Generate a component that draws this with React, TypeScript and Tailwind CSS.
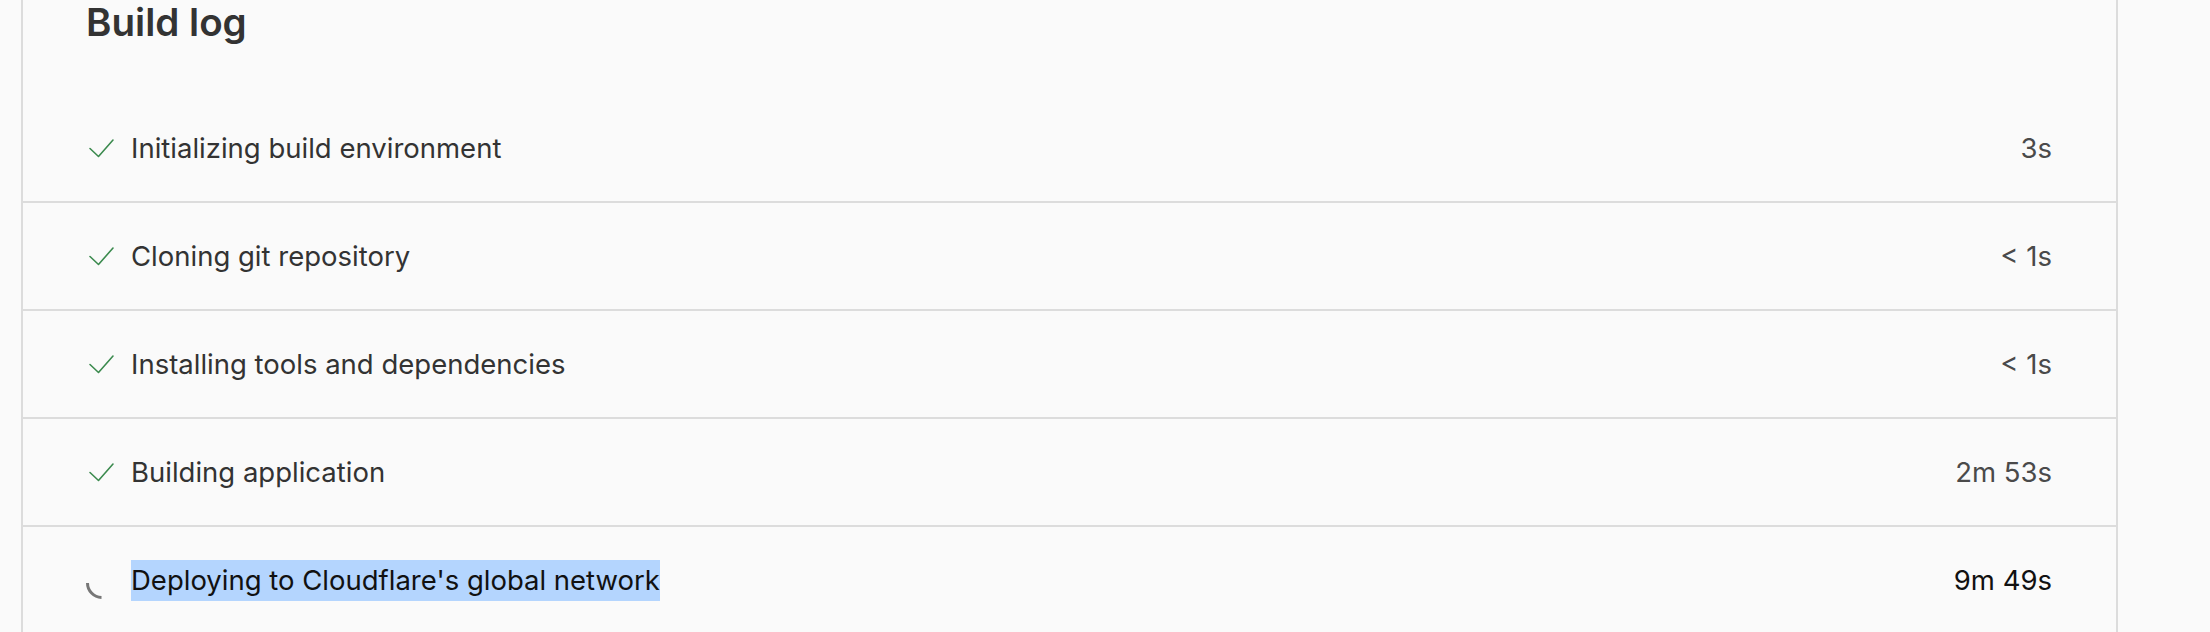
import React from "react"

type Step = {
  label: string
  time: string
  status: "done" | "running"
}

const steps: Step[] = [
  { label: "Initializing build environment", time: "3s", status: "done" },
  { label: "Cloning git repository", time: "< 1s", status: "done" },
  { label: "Installing tools and dependencies", time: "< 1s", status: "done" },
  { label: "Building application", time: "2m 53s", status: "done" },
  { label: "Deploying to Cloudflare's global network", time: "9m 49s", status: "running" },
]

function CheckIcon() {
  return (
    <svg width="27" height="22" viewBox="0 0 27 22" fill="none" className="ml-[3px]">
      <path d="M2 11.5 L10.5 19.5 L25 3" stroke="#3b8a4e" strokeWidth="1.6" strokeLinecap="round" strokeLinejoin="round" />
    </svg>
  )
}

function Spinner() {
  // only the lower-left quarter of the ring is drawn
  return (
    <svg width="32" height="32" viewBox="0 0 32 32" fill="none" className="mt-[6px] ml-[1px]">
      <path d="M1.5 16 A14.5 14.5 0 0 0 15.5 30.5" stroke="#777777" strokeWidth="3" strokeLinecap="butt" />
    </svg>
  )
}

function StepRow({ step }: { step: Step }) {
  const running = step.status === "running"
  return (
    <div className="flex h-[108px] items-center border-b-2 border-[#dcdcdc] pr-[64px] pl-[62px]">
      <div className="flex w-[46px] items-center">
        {running ? <Spinner /> : <CheckIcon />}
      </div>
      <div className="flex-1">
        {running ? (
          <span className="inline-block bg-[#b4d5fe] text-[27.5px] leading-[41px] text-[#111111]">{step.label}</span>
        ) : (
          <span className="text-[27.5px] leading-[41px] text-[#333333]">{step.label}</span>
        )}
      </div>
      <div className={`text-[27.5px] leading-[41px] ${running ? "text-[#111111]" : "text-[#4a4a4a]"}`}>
        {step.time}
      </div>
    </div>
  )
}

export default function App() {
  return (
    <main className="h-[632px] w-[2210px] overflow-hidden bg-[#fafafa] font-['Inter',sans-serif]">
      <section className="ml-[21px] h-[700px] w-[2097px] border-x-2 border-[#dcdcdc]">
        <h1 className="-mt-[2px] pl-[63px] text-[38.6px] leading-[48px] font-semibold text-[#333333]">Build log</h1>
        <div className="mt-[49px]">
          {steps.map((step) => (
            <StepRow key={step.label} step={step} />
          ))}
        </div>
      </section>
    </main>
  )
}
